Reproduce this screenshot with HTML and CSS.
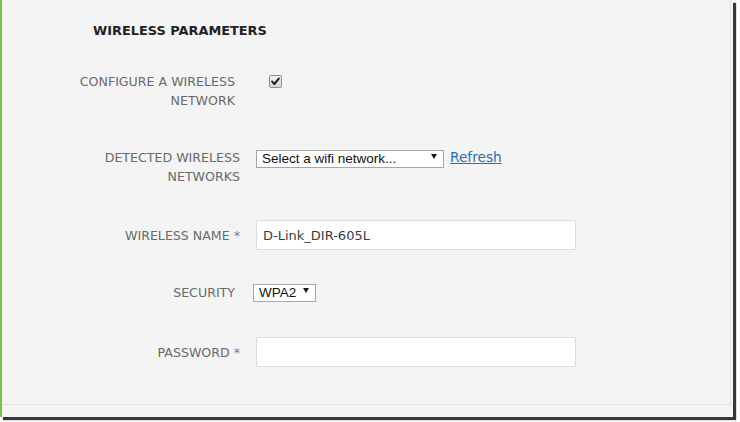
FILE: index.html
```html
<!DOCTYPE html>
<html>
<head>
<meta charset="utf-8">
<link rel="stylesheet" href="styles.css">
</head>
<body>
<div class="frame">
  <div class="panel">
    <h2 class="title">WIRELESS PARAMETERS</h2>
    <div class="form">
      <div class="row row-configure">
        <div class="label label-inset">CONFIGURE A WIRELESS NETWORK</div>
        <div class="field">
          <span class="checkbox"><svg width="11" height="11" viewBox="0 0 11 11"><path d="M2.2 5.6 L4.4 8 L8.8 2.6" fill="none" stroke="#1e1e1e" stroke-width="2" stroke-linecap="round" stroke-linejoin="round"/></svg></span>
        </div>
      </div>
      <div class="row row-detected">
        <div class="label">DETECTED WIRELESS NETWORKS</div>
        <div class="field field-inline">
          <span class="select select-wide"><select><option>Select a wifi network...</option></select></span>
          <a class="link" href="#">Refresh</a>
        </div>
      </div>
      <div class="row row-name">
        <div class="label">WIRELESS NAME <span class="req">*</span></div>
        <div class="field"><input class="text" type="text" value="D-Link_DIR-605L"></div>
      </div>
      <div class="row row-security">
        <div class="label label-inset">SECURITY</div>
        <div class="field"><span class="select select-small"><select><option>WPA2</option></select></span></div>
      </div>
      <div class="row row-password">
        <div class="label">PASSWORD <span class="req">*</span></div>
        <div class="field"><input class="text" type="password" value=""></div>
      </div>
    </div>
  </div>
</div>
</body>
</html>
```
FILE: styles.css
```css
html, body {
  margin: 0;
  padding: 0;
  background: #ffffff;
}
body {
  width: 740px;
  height: 422px;
  overflow: hidden;
  font-family: "DejaVu Sans", Verdana, sans-serif;
}
.frame {
  box-sizing: border-box;
  width: 733px;
  height: 417px;
  background: #f4f4f4;
  border-left: 2px solid #7dc243;
  box-shadow: 3px 3px 1px rgba(20, 20, 20, 0.85);
}
.panel {
  box-sizing: border-box;
  width: 729px;
  height: 405px;
  border-right: 1px solid #e1e1e1;
  border-bottom: 1px solid #e1e1e1;
}
.title {
  margin: 0;
  padding: 23px 0 0 91px;
  font-size: 12.9px;
  line-height: 16px;
  font-weight: bold;
  color: #222222;
}
.form {
  display: flex;
  flex-direction: column;
}
.row {
  display: grid;
  grid-template-columns: 238px 1fr;
  column-gap: 16px;
  align-items: center;
}
.row-configure { margin-top: 33px; align-items: start; }
.row-detected { margin-top: 38px; align-items: start; }
.row-name { margin-top: 34px; }
.row-security { margin-top: 32px; }
.row-password { margin-top: 35px; }
.label {
  padding-left: 70px;
  text-align: right;
  font-size: 12.6px;
  line-height: 19px;
  color: #6a6a6a;
}
.label-inset { padding-right: 5px; }
.req { color: #5b86c0; }
.field {
  display: flex;
  align-items: center;
}
.field-inline { gap: 6px; }
.checkbox {
  box-sizing: border-box;
  width: 13px;
  height: 13px;
  margin: 3px 0 0 13px;
  border: 1px solid #8e8e8e;
  border-radius: 2px;
  background: linear-gradient(#f3f3f3, #d6d6d6);
  display: flex;
  align-items: center;
  justify-content: center;
}
.checkbox svg { display: block; }
.select {
  position: relative;
  display: inline-block;
}
.select select {
  appearance: none;
  -webkit-appearance: none;
  box-sizing: border-box;
  height: 18px;
  margin: 0;
  padding: 0 0 0 5px;
  border: 1px solid #a7a7a7;
  border-radius: 0;
  background: #ffffff;
  font-family: "Liberation Sans", Arial, sans-serif;
  font-size: 13.5px;
  line-height: 16px;
  color: #111111;
}
.select::after {
  content: "";
  position: absolute;
  top: 6px;
  right: 7px;
  border-left: 3.5px solid transparent;
  border-right: 3.5px solid transparent;
  border-top: 5px solid #1a1a1a;
  pointer-events: none;
}
.select-wide select { width: 188px; }
.select-small { margin-left: -3px; }
.select-small select {
  width: 63px;
  padding-left: 5px;
}
.link {
  font-size: 13.7px;
  line-height: 16px;
  color: #2d6db5;
  text-decoration: underline;
  position: relative;
  top: -1px;
}
.text {
  box-sizing: border-box;
  width: 320px;
  height: 30px;
  margin: 0;
  padding: 0 6px;
  border: 1px solid #dcdcdc;
  background: #ffffff;
  font-family: "DejaVu Sans", Verdana, sans-serif;
  font-size: 13px;
  color: #3c3c3c;
  outline: none;
}
```
